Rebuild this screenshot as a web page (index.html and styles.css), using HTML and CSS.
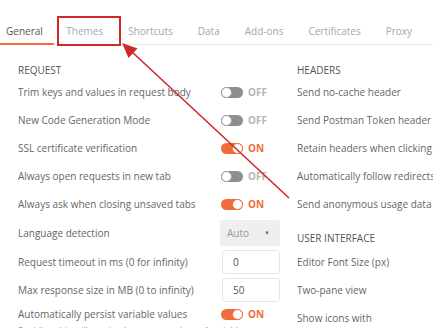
FILE: index.html
```html
<!DOCTYPE html>
<html>
<head>
    <meta charset="utf-8">
    <title>Settings</title>
    <link rel="stylesheet" href="styles.css">
</head>
<body>
    <div class="tabs">
        <span class="tab active">General</span>
        <span class="tab">Themes</span>
        <span class="tab">Shortcuts</span>
        <span class="tab">Data</span>
        <span class="tab">Add-ons</span>
        <span class="tab">Certificates</span>
        <span class="tab">Proxy</span>
    </div>

    <div class="settings">
        <div class="column">
            <div class="heading">REQUEST</div>
            <div class="row">
                <span class="label">Trim keys and values in request body</span>
                <span class="control"><span class="toggle"></span><span class="state">OFF</span></span>
            </div>
            <div class="row">
                <span class="label">New Code Generation Mode</span>
                <span class="control"><span class="toggle"></span><span class="state">OFF</span></span>
            </div>
            <div class="row">
                <span class="label">SSL certificate verification</span>
                <span class="control"><span class="toggle on"></span><span class="state on">ON</span></span>
            </div>
            <div class="row">
                <span class="label">Always open requests in new tab</span>
                <span class="control"><span class="toggle"></span><span class="state">OFF</span></span>
            </div>
            <div class="row">
                <span class="label">Always ask when closing unsaved tabs</span>
                <span class="control"><span class="toggle on"></span><span class="state on">ON</span></span>
            </div>
            <div class="row tall">
                <span class="label">Language detection</span>
                <span class="control"><span class="select">Auto <span class="caret">&#9660;</span></span></span>
            </div>
            <div class="row">
                <span class="label">Request timeout in ms (0 for infinity)</span>
                <span class="control"><span class="input">0</span></span>
            </div>
            <div class="row">
                <span class="label">Max response size in MB (0 to infinity)</span>
                <span class="control"><span class="input">50</span></span>
            </div>
            <div class="row short">
                <span class="label">Automatically persist variable values</span>
                <span class="control"><span class="toggle on"></span><span class="state on">ON</span></span>
            </div>
            <div class="hint">Enabling this will persist the current values of variables</div>
        </div>

        <div class="column">
            <div class="heading">HEADERS</div>
            <div class="row">
                <span class="label">Send no-cache header</span>
                <span class="control"><span class="toggle on"></span><span class="state on">ON</span></span>
            </div>
            <div class="row">
                <span class="label">Send Postman Token header</span>
                <span class="control"><span class="toggle on"></span><span class="state on">ON</span></span>
            </div>
            <div class="row">
                <span class="label">Retain headers when clicking on links</span>
                <span class="control"><span class="toggle"></span><span class="state">OFF</span></span>
            </div>
            <div class="row">
                <span class="label">Automatically follow redirects</span>
                <span class="control"><span class="toggle on"></span><span class="state on">ON</span></span>
            </div>
            <div class="row">
                <span class="label">Send anonymous usage data to Postman</span>
                <span class="control"><span class="toggle on"></span><span class="state on">ON</span></span>
            </div>
            <div class="heading sub">USER INTERFACE</div>
            <div class="row">
                <span class="label">Editor Font Size (px)</span>
                <span class="control"><span class="input">12</span></span>
            </div>
            <div class="row">
                <span class="label">Two-pane view</span>
                <span class="control"><span class="toggle"></span><span class="state">OFF</span></span>
            </div>
            <div class="row">
                <span class="label">Show icons with</span>
                <span class="control"><span class="toggle on"></span><span class="state on">ON</span></span>
            </div>
        </div>
    </div>

    <svg class="annotation" width="433" height="328" viewBox="0 0 433 328">
        <rect x="58" y="17" width="62" height="28" fill="none" stroke="#d0282d" stroke-width="2"/>
        <line x1="289" y1="198" x2="131" y2="51" stroke="#d0282d" stroke-width="1.6"/>
        <polygon points="122,43 137.5,48.5 128.5,58" fill="#d0282d"/>
    </svg>
</body>
</html>
```

FILE: styles.css
```css
html,
body {
    margin: 0;
    height: 100%;
    overflow: hidden;
    background: #fff;
}
body {
    position: relative;
    font-family: "Open Sans", "Liberation Sans", sans-serif;
    font-size: 10px;
    color: #666;
}
.tabs {
    display: flex;
    height: 45px;
    box-sizing: border-box;
    border-bottom: 1px solid #ececec;
    white-space: nowrap;
}
.tab {
    padding: 23px 12.5px 0;
    line-height: 16px;
    color: #a8a8a8;
}
.tab.active {
    padding-left: 6px;
    padding-right: 11px;
    color: #555;
    border-bottom: 2px solid #f26b3a;
    margin-bottom: -1px;
}

.settings {
    display: flex;
    padding-left: 18px;
}
.column {
    flex: none;
    width: 279px;
}
.heading {
    margin-top: 17px;
    line-height: 16px;
    color: #555;
}
.heading.sub {
    margin-top: 0;
    height: 30px;
    padding-top: 12px;
    box-sizing: border-box;
}
.row {
    display: grid;
    grid-template-columns: 203px 76px;
    align-items: center;
    height: 28px;
    white-space: nowrap;
}
.row.tall {
    height: 30px;
}
.row.short {
    height: 20px;
}
.label {
    overflow: hidden;
}
.control {
    display: flex;
    align-items: center;
}
.toggle {
    position: relative;
    width: 22px;
    height: 11px;
    border-radius: 6px;
    background: #8e8e8e;
}
.toggle::after {
    content: "";
    position: absolute;
    left: 0;
    top: 0;
    width: 9px;
    height: 9px;
    border-radius: 50%;
    background: #fff;
    border: 1px solid #a0a0a0;
}
.toggle.on {
    background: #f26b3a;
}
.toggle.on::after {
    left: auto;
    right: 0;
    border-color: #f26b3a;
}
.state {
    margin-left: 5px;
    font-weight: bold;
    color: #b4b4b4;
}
.state.on {
    color: #f26b3a;
}
.select {
    display: flex;
    align-items: center;
    justify-content: space-between;
    width: 60px;
    height: 26px;
    box-sizing: border-box;
    padding: 0 10px 0 7px;
    margin-left: -1px;
    background: #efefef;
    border-radius: 2px;
    color: #999;
}
.caret {
    font-size: 6px;
    color: #777;
}
.input {
    display: flex;
    align-items: center;
    width: 58px;
    height: 24px;
    box-sizing: border-box;
    padding-left: 10px;
    margin-left: 1px;
    border: 1px solid #e6e6e6;
    border-radius: 3px;
    color: #555;
}
.hint {
    font-size: 9px;
    line-height: 14px;
    color: #999;
    white-space: nowrap;
}
.annotation {
    position: absolute;
    left: 0;
    top: 0;
    pointer-events: none;
}
```
